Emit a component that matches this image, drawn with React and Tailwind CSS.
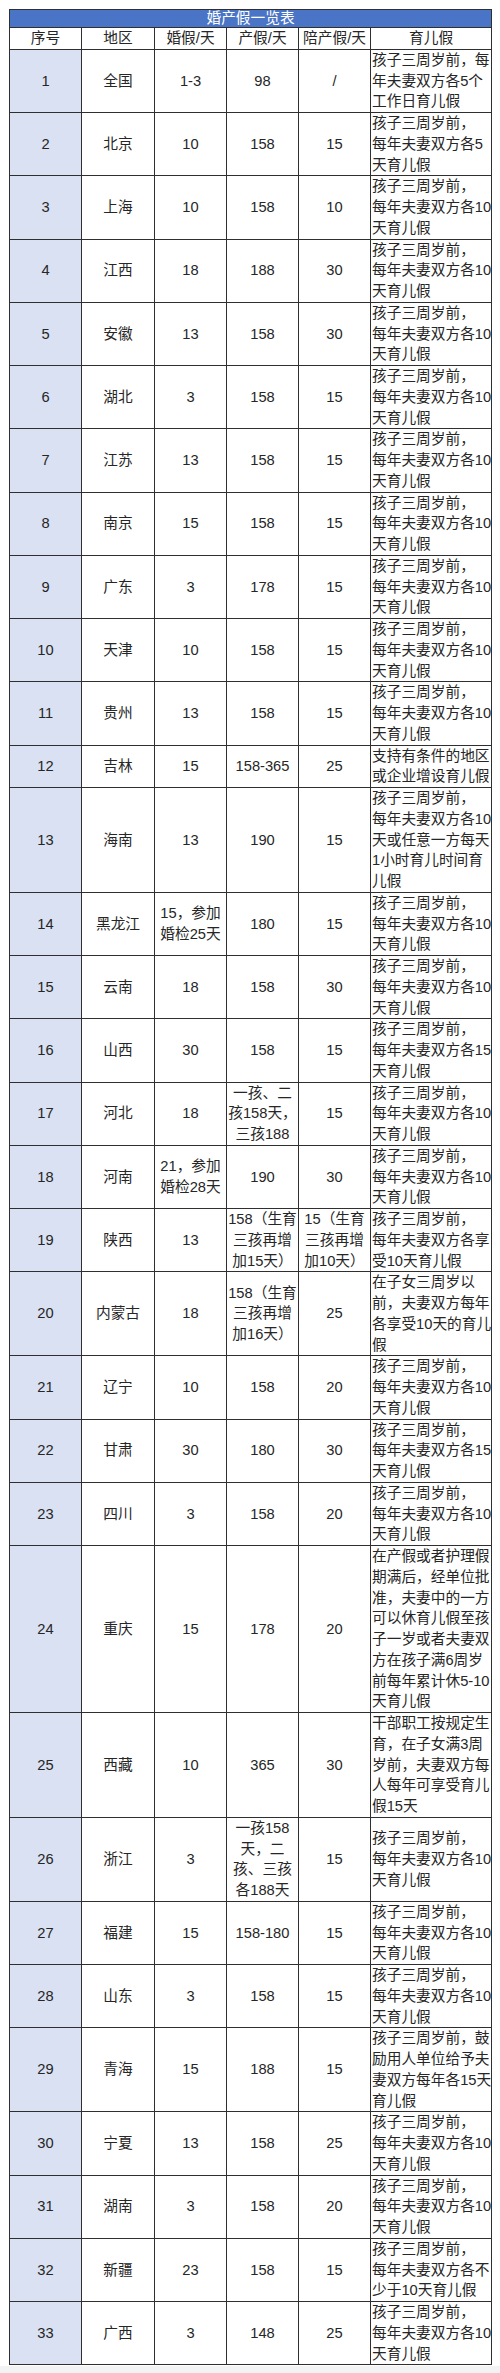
const rows = [
  ["1", "全国", ["1-3"], ["98"], ["/"], ["孩子三周岁前，每", "年夫妻双方各5个", "工作日育儿假"]],
  ["2", "北京", ["10"], ["158"], ["15"], ["孩子三周岁前，", "每年夫妻双方各5", "天育儿假"]],
  ["3", "上海", ["10"], ["158"], ["10"], ["孩子三周岁前，", "每年夫妻双方各10", "天育儿假"]],
  ["4", "江西", ["18"], ["188"], ["30"], ["孩子三周岁前，", "每年夫妻双方各10", "天育儿假"]],
  ["5", "安徽", ["13"], ["158"], ["30"], ["孩子三周岁前，", "每年夫妻双方各10", "天育儿假"]],
  ["6", "湖北", ["3"], ["158"], ["15"], ["孩子三周岁前，", "每年夫妻双方各10", "天育儿假"]],
  ["7", "江苏", ["13"], ["158"], ["15"], ["孩子三周岁前，", "每年夫妻双方各10", "天育儿假"]],
  ["8", "南京", ["15"], ["158"], ["15"], ["孩子三周岁前，", "每年夫妻双方各10", "天育儿假"]],
  ["9", "广东", ["3"], ["178"], ["15"], ["孩子三周岁前，", "每年夫妻双方各10", "天育儿假"]],
  ["10", "天津", ["10"], ["158"], ["15"], ["孩子三周岁前，", "每年夫妻双方各10", "天育儿假"]],
  ["11", "贵州", ["13"], ["158"], ["15"], ["孩子三周岁前，", "每年夫妻双方各10", "天育儿假"]],
  ["12", "吉林", ["15"], ["158-365"], ["25"], ["支持有条件的地区", "或企业增设育儿假"]],
  ["13", "海南", ["13"], ["190"], ["15"], ["孩子三周岁前，", "每年夫妻双方各10", "天或任意一方每天", "1小时育儿时间育", "儿假"]],
  ["14", "黑龙江", ["15，参加", "婚检25天"], ["180"], ["15"], ["孩子三周岁前，", "每年夫妻双方各10", "天育儿假"]],
  ["15", "云南", ["18"], ["158"], ["30"], ["孩子三周岁前，", "每年夫妻双方各10", "天育儿假"]],
  ["16", "山西", ["30"], ["158"], ["15"], ["孩子三周岁前，", "每年夫妻双方各15", "天育儿假"]],
  ["17", "河北", ["18"], ["一孩、二", "孩158天，", "三孩188"], ["15"], ["孩子三周岁前，", "每年夫妻双方各10", "天育儿假"]],
  ["18", "河南", ["21，参加", "婚检28天"], ["190"], ["30"], ["孩子三周岁前，", "每年夫妻双方各10", "天育儿假"]],
  ["19", "陕西", ["13"], ["158（生育", "三孩再增", "加15天）"], ["15（生育", "三孩再增", "加10天）"], ["孩子三周岁前，", "每年夫妻双方各享", "受10天育儿假"]],
  ["20", "内蒙古", ["18"], ["158（生育", "三孩再增", "加16天）"], ["25"], ["在子女三周岁以", "前，夫妻双方每年", "各享受10天的育儿", "假"]],
  ["21", "辽宁", ["10"], ["158"], ["20"], ["孩子三周岁前，", "每年夫妻双方各10", "天育儿假"]],
  ["22", "甘肃", ["30"], ["180"], ["30"], ["孩子三周岁前，", "每年夫妻双方各15", "天育儿假"]],
  ["23", "四川", ["3"], ["158"], ["20"], ["孩子三周岁前，", "每年夫妻双方各10", "天育儿假"]],
  ["24", "重庆", ["15"], ["178"], ["20"], ["在产假或者护理假", "期满后，经单位批", "准，夫妻中的一方", "可以休育儿假至孩", "子一岁或者夫妻双", "方在孩子满6周岁", "前每年累计休5-10", "天育儿假"]],
  ["25", "西藏", ["10"], ["365"], ["30"], ["干部职工按规定生", "育，在子女满3周", "岁前，夫妻双方每", "人每年可享受育儿", "假15天"]],
  ["26", "浙江", ["3"], ["一孩158", "天，二", "孩、三孩", "各188天"], ["15"], ["孩子三周岁前，", "每年夫妻双方各10", "天育儿假"]],
  ["27", "福建", ["15"], ["158-180"], ["15"], ["孩子三周岁前，", "每年夫妻双方各10", "天育儿假"]],
  ["28", "山东", ["3"], ["158"], ["15"], ["孩子三周岁前，", "每年夫妻双方各10", "天育儿假"]],
  ["29", "青海", ["15"], ["188"], ["15"], ["孩子三周岁前，鼓", "励用人单位给予夫", "妻双方每年各15天", "育儿假"]],
  ["30", "宁夏", ["13"], ["158"], ["25"], ["孩子三周岁前，", "每年夫妻双方各10", "天育儿假"]],
  ["31", "湖南", ["3"], ["158"], ["20"], ["孩子三周岁前，", "每年夫妻双方各10", "天育儿假"]],
  ["32", "新疆", ["23"], ["158"], ["15"], ["孩子三周岁前，", "每年夫妻双方各不", "少于10天育儿假"]],
  ["33", "广西", ["3"], ["148"], ["25"], ["孩子三周岁前，", "每年夫妻双方各10", "天育儿假"]],
];

function Lines({ lines }) {
  return lines.map((line, i) => (
    <div key={i} className="whitespace-nowrap">
      {line}
    </div>
  ));
}

const cell = "border border-[#2f2f2f] p-0 align-middle text-center";

export default function App() {
  return (
    <div
      className="min-h-[2373px] bg-white text-[14.7px] leading-[20.75px] text-[#262626]"
      style={{ fontFamily: '"Liberation Sans", "Noto Sans CJK SC", sans-serif' }}
    >
      <div className="pl-[9px] pt-[9px]">
        <table className="w-[482px] table-fixed border-collapse">
          <colgroup>
            <col className="w-[72px]" />
            <col className="w-[73px]" />
            <col className="w-[72px]" />
            <col className="w-[72px]" />
            <col className="w-[72px]" />
            <col className="w-[121px]" />
          </colgroup>
          <thead>
            <tr>
              <th
                colSpan={6}
                className="h-[18px] border border-[#2f2f2f] bg-[#4a74c6] p-0 text-center text-[14.7px] font-normal leading-[17px] text-white"
              >
                婚产假一览表
              </th>
            </tr>
            <tr>
              {["序号", "地区", "婚假/天", "产假/天", "陪产假/天", "育儿假"].map((h) => (
                <th key={h} className={`${cell} font-normal`}>
                  {h}
                </th>
              ))}
            </tr>
          </thead>
          <tbody>
            {rows.map(([no, region, marriage, maternity, paternity, parental]) => (
              <tr key={no}>
                <td className={`${cell} bg-[#d9e1f2]`}>{no}</td>
                <td className={cell}>{region}</td>
                <td className={cell}>
                  <Lines lines={marriage} />
                </td>
                <td className={cell}>
                  <Lines lines={maternity} />
                </td>
                <td className={cell}>
                  <Lines lines={paternity} />
                </td>
                <td className="overflow-hidden border border-[#2f2f2f] p-0 pl-px text-left align-middle">
                  <Lines lines={parental} />
                </td>
              </tr>
            ))}
          </tbody>
        </table>
      </div>
      <div className="mt-px h-[12px] bg-[#f3f3f3]" />
    </div>
  );
}
